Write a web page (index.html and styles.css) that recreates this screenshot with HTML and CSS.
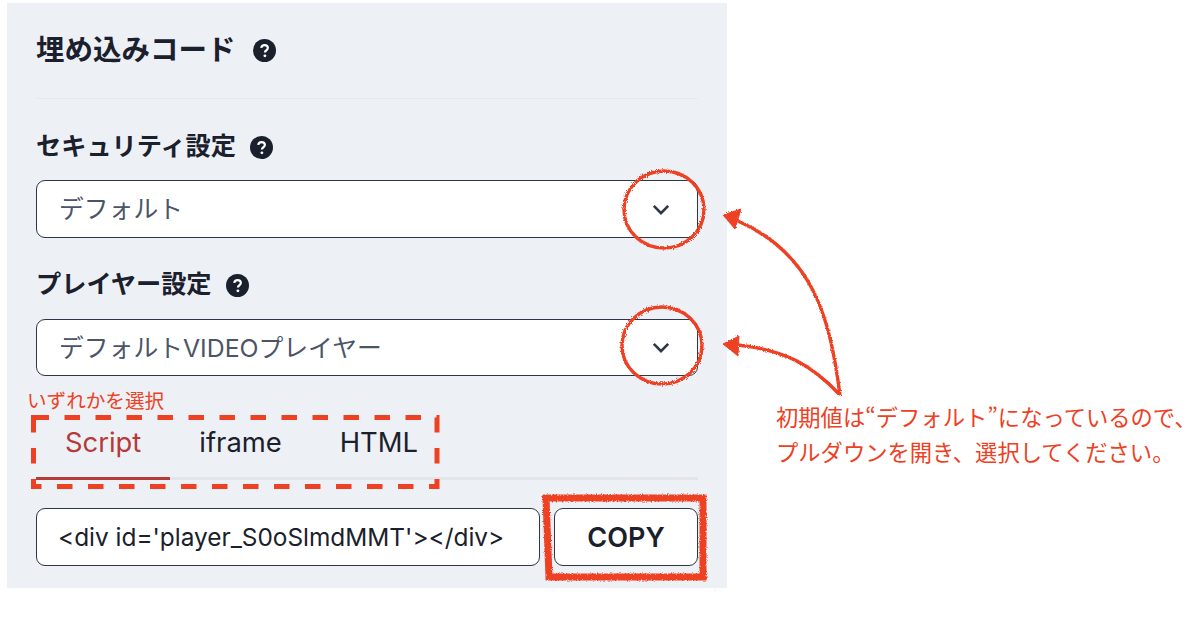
FILE: index.html
```html
<!DOCTYPE html>
<html lang="ja">
<head>
<meta charset="utf-8">
<title>埋め込みコード</title>
<link rel="stylesheet" href="styles.css">
</head>
<body>
<main class="panel">
  <header class="head">
    <h1 class="title">埋め込みコード</h1>
    <svg class="help" viewBox="0 0 24 24"><circle cx="12" cy="12" r="12" fill="#1a202c"/><path d="M8.6 9.3c.2-1.9 1.6-3 3.5-3 2 0 3.4 1.1 3.4 2.9 0 1.4-.8 2.1-1.8 2.8-.9.6-1.2 1-1.2 2" fill="none" stroke="#fff" stroke-width="2.3"/><circle cx="12.4" cy="17.6" r="1.5" fill="#fff"/></svg>
  </header>
  <section class="field">
    <div class="label-row"><h2 class="label">セキュリティ設定</h2>
      <svg class="help" viewBox="0 0 24 24"><circle cx="12" cy="12" r="12" fill="#1a202c"/><path d="M8.6 9.3c.2-1.9 1.6-3 3.5-3 2 0 3.4 1.1 3.4 2.9 0 1.4-.8 2.1-1.8 2.8-.9.6-1.2 1-1.2 2" fill="none" stroke="#fff" stroke-width="2.3"/><circle cx="12.4" cy="17.6" r="1.5" fill="#fff"/></svg></div>
    <div class="select"><span>デフォルト</span>
      <svg class="chev" viewBox="0 0 20 12"><path d="M2 2l8 8 8-8" fill="none" stroke="#2d3748" stroke-width="3"/></svg></div>
  </section>
  <section class="field field-2">
    <div class="label-row"><h2 class="label">プレイヤー設定</h2>
      <svg class="help" viewBox="0 0 24 24"><circle cx="12" cy="12" r="12" fill="#1a202c"/><path d="M8.6 9.3c.2-1.9 1.6-3 3.5-3 2 0 3.4 1.1 3.4 2.9 0 1.4-.8 2.1-1.8 2.8-.9.6-1.2 1-1.2 2" fill="none" stroke="#fff" stroke-width="2.3"/><circle cx="12.4" cy="17.6" r="1.5" fill="#fff"/></svg></div>
    <div class="select select-2"><span>デフォルトVIDEOプレイヤー</span>
      <svg class="chev" viewBox="0 0 20 12"><path d="M2 2l8 8 8-8" fill="none" stroke="#2d3748" stroke-width="3"/></svg></div>
  </section>
  <nav class="tabs">
    <div class="tab active">Script</div>
    <div class="tab">iframe</div>
    <div class="tab">HTML</div>
  </nav>
  <div class="code-row">
    <div class="code">&lt;div id='player_S0oSlmdMMT'&gt;&lt;/div&gt;</div>
    <button class="copy">COPY</button>
  </div>
</main>

<svg class="marks" viewBox="0 0 1202 628">
  <defs>
    <filter id="rough" x="-5%" y="-5%" width="110%" height="110%">
      <feTurbulence type="fractalNoise" baseFrequency="0.8" numOctaves="2" seed="4"/>
      <feDisplacementMap in="SourceGraphic" scale="3.5"/>
    </filter>
  </defs>
  <g fill="none" stroke="#ee4023" filter="url(#rough)">
    <ellipse stroke-width="3.4" cx="664" cy="209.5" rx="40" ry="38.5"/>
    <ellipse stroke-width="3.4" cx="662" cy="345.5" rx="40" ry="38.5"/>
    <path stroke-width="3.4" d="M840 395C830 320 815 255 738 221"/>
    <path stroke-width="3.4" d="M840 395C812 365 785 350 738 345"/>
    <path stroke-width="7" d="M546 498H703V577H549Z"/>
  </g>
  <path fill="#ee4023" stroke="#ee4023" filter="url(#rough)" d="M723 215L741 209 735 229Z"/>
  <path fill="#ee4023" stroke="#ee4023" filter="url(#rough)" d="M723 344L739 336 738 356Z"/>
  <rect class="dash" x="33.5" y="417.5" width="403.5" height="69"/>
</svg>
<p class="note note-pick">いずれかを選択</p>
<p class="note note-main">初期値は“デフォルト”になっているので、<br>プルダウンを開き、選択してください。</p>
</body>
</html>
```
FILE: styles.css
```css
* { box-sizing: border-box; }
html, body { margin: 0; padding: 0; }
body {
  position: relative;
  width: 1202px;
  height: 628px;
  overflow: hidden;
  background: #fff;
  color: #1a202c;
  font-family: Inter, "Noto Sans CJK JP", sans-serif;
}
.panel {
  width: 720px;
  height: 585px;
  margin: 3px 0 0 7px;
  padding: 0 29px;
  background: #edf0f5;
}
.head {
  display: flex;
  align-items: center;
  gap: 17px;
  height: 96px;
  border-bottom: 1px solid #e6e9ef;
}
.title { margin: 0; font-size: 28.5px; font-weight: 700; line-height: 1; }
.help { width: 23px; height: 23px; flex: none; }
.field { margin-top: 28px; }
.field-2 { margin-top: 27px; }
.label-row { display: flex; align-items: center; gap: 14px; height: 40px; }
.label { margin: 0; font-size: 25.2px; font-weight: 700; line-height: 1; }
.select {
  display: flex;
  align-items: center;
  justify-content: space-between;
  height: 58px;
  margin-top: 13px;
  padding: 0 27px 0 22px;
  background: #fff;
  border: 1px solid #2d3748;
  border-radius: 9px;
  font-size: 24.8px;
  color: #4a5568;
}
.select span { margin-bottom: 4px; }
.select-2 { height: 57px; margin-top: 14px; }
.chev { width: 18px; height: 11px; }
.tabs {
  display: flex;
  height: 104px;
  padding-top: 44px;
  border-bottom: 3px solid #e2e5ea;
}
.tab {
  height: 60px;
  padding: 0 29px;
  font-size: 27.4px;
  line-height: 44px;
  color: #1a202c;
}
.tab.active { color: #b53a38; border-bottom: 3px solid #b53a38; }
.code-row { display: flex; gap: 14px; margin-top: 28px; height: 58px; }
.code {
  width: 504px;
  padding-left: 21px;
  background: #fff;
  border: 1px solid #2d3748;
  border-radius: 9px;
  font-size: 24.4px;
  line-height: 56px;
  white-space: nowrap;
}
.copy {
  width: 144px;
  background: #fff;
  border: 1px solid #2d3748;
  border-radius: 9px;
  padding: 0;
  color: #1a202c;
  font-family: inherit;
  font-size: 27px;
  font-weight: 600;
}
.marks { position: absolute; left: 0; top: 0; width: 1202px; height: 628px; pointer-events: none; }
.dash { fill: none; stroke: #ee4023; stroke-width: 5; stroke-dasharray: 15.5 15.5; }
.note {
  position: absolute;
  margin: 0;
  color: #ee4023;
  font-family: "Noto Sans CJK JP", sans-serif;
  white-space: nowrap;
}
.note-pick { left: 27px; top: 387px; font-size: 19.6px; line-height: 26px; }
.note-main { left: 776px; top: 399px; font-size: 22.3px; line-height: 35px; }
```
